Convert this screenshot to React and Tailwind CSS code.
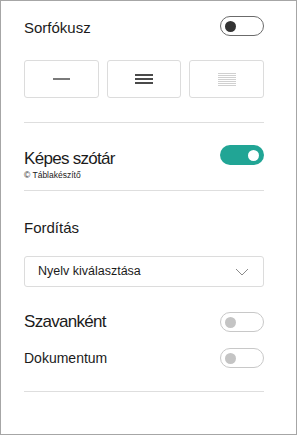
import React from "react";

const Toggle = ({ on, disabled }) => {
  if (on) {
    return (
      <div className="w-[44px] h-[20px] rounded-full bg-[#21a595] flex items-center justify-end pr-[5px] shrink-0">
        <div className="w-[11px] h-[11px] rounded-full bg-white" />
      </div>
    );
  }
  return (
    <div
      className={
        "w-[44px] h-[20px] rounded-full border flex items-center pl-[4px] shrink-0 " +
        (disabled ? "border-[#c8c8c8]" : "border-[#6b6b6b]")
      }
    >
      <div
        className={
          "w-[11px] h-[11px] rounded-full " +
          (disabled ? "bg-[#c4c4c4]" : "bg-[#333333]")
        }
      />
    </div>
  );
};

const App = () => {
  return (
    <div
      className="w-[297px] h-[435px] border border-[#a6a6a6] bg-white pl-[23px] pr-[32px] pt-[14px] text-[#1b1b1b]"
      style={{ fontFamily: '"Liberation Sans", Arial, sans-serif' }}
    >
      <div className="flex items-center justify-between h-[20px] mt-[1px]">
        <span className="text-[15px] mt-[4px]">Sorfókusz</span>
        <Toggle />
      </div>

      <div className="grid grid-cols-3 gap-[8px] mt-[24px]">
        <button className="h-[38px] border border-[#dcdcdc] rounded-[3px] flex items-center justify-center">
          <div className="w-[17px] h-[2px] bg-[#7a7a7a]" />
        </button>
        <button className="h-[38px] border border-[#dcdcdc] rounded-[3px] flex flex-col items-center justify-center gap-[2px]">
          <div className="w-[18px] h-[2px] bg-[#4a4a4a]" />
          <div className="w-[18px] h-[2px] bg-[#4a4a4a]" />
          <div className="w-[18px] h-[2px] bg-[#4a4a4a]" />
        </button>
        <button className="h-[38px] border border-[#dcdcdc] rounded-[3px] flex flex-col items-center justify-center gap-[1px]">
          <div className="w-[18px] h-[1px] bg-[#d0d0d0]" />
          <div className="w-[18px] h-[1px] bg-[#d0d0d0]" />
          <div className="w-[18px] h-[1px] bg-[#d0d0d0]" />
          <div className="w-[18px] h-[1px] bg-[#d0d0d0]" />
          <div className="w-[18px] h-[1px] bg-[#d0d0d0]" />
          <div className="w-[18px] h-[1px] bg-[#d0d0d0]" />
          <div className="w-[18px] h-[1px] bg-[#d0d0d0]" />
        </button>
      </div>

      <div className="h-[1px] bg-[#dedede] mt-[24px]" />

      <div className="flex justify-between mt-[22px]">
        <div className="flex flex-col">
          <span className="text-[17px] tracking-[-0.7px] leading-[20px] mt-[4px]">Képes szótár</span>
          <span className="text-[8.5px] leading-[10px] mt-[1px]">© Táblakészítő</span>
        </div>
        <Toggle on />
      </div>

      <div className="h-[1px] bg-[#dedede] mt-[10px]" />

      <div className="text-[15px] mt-[28px] leading-[18px]">Fordítás</div>

      <div className="h-[31px] mt-[19px] border border-[#dcdcdc] rounded-[3px] flex items-center justify-between pl-[13px] pr-[14px]">
        <span className="text-[12.5px]">Nyelv kiválasztása</span>
        <svg width="14" height="8" viewBox="0 0 14 8" fill="none">
          <path d="M1 1l6 6 6-6" stroke="#8a8a8a" strokeWidth="1" />
        </svg>
      </div>

      <div className="flex items-center justify-between h-[20px] mt-[25px]">
        <span className="text-[17px] tracking-[-0.7px]">Szavanként</span>
        <Toggle disabled />
      </div>

      <div className="flex items-center justify-between h-[20px] mt-[16px]">
        <span className="text-[14px]">Dokumentum</span>
        <Toggle disabled />
      </div>

      <div className="h-[1px] bg-[#dedede] mt-[23px]" />
    </div>
  );
};

export default App;
